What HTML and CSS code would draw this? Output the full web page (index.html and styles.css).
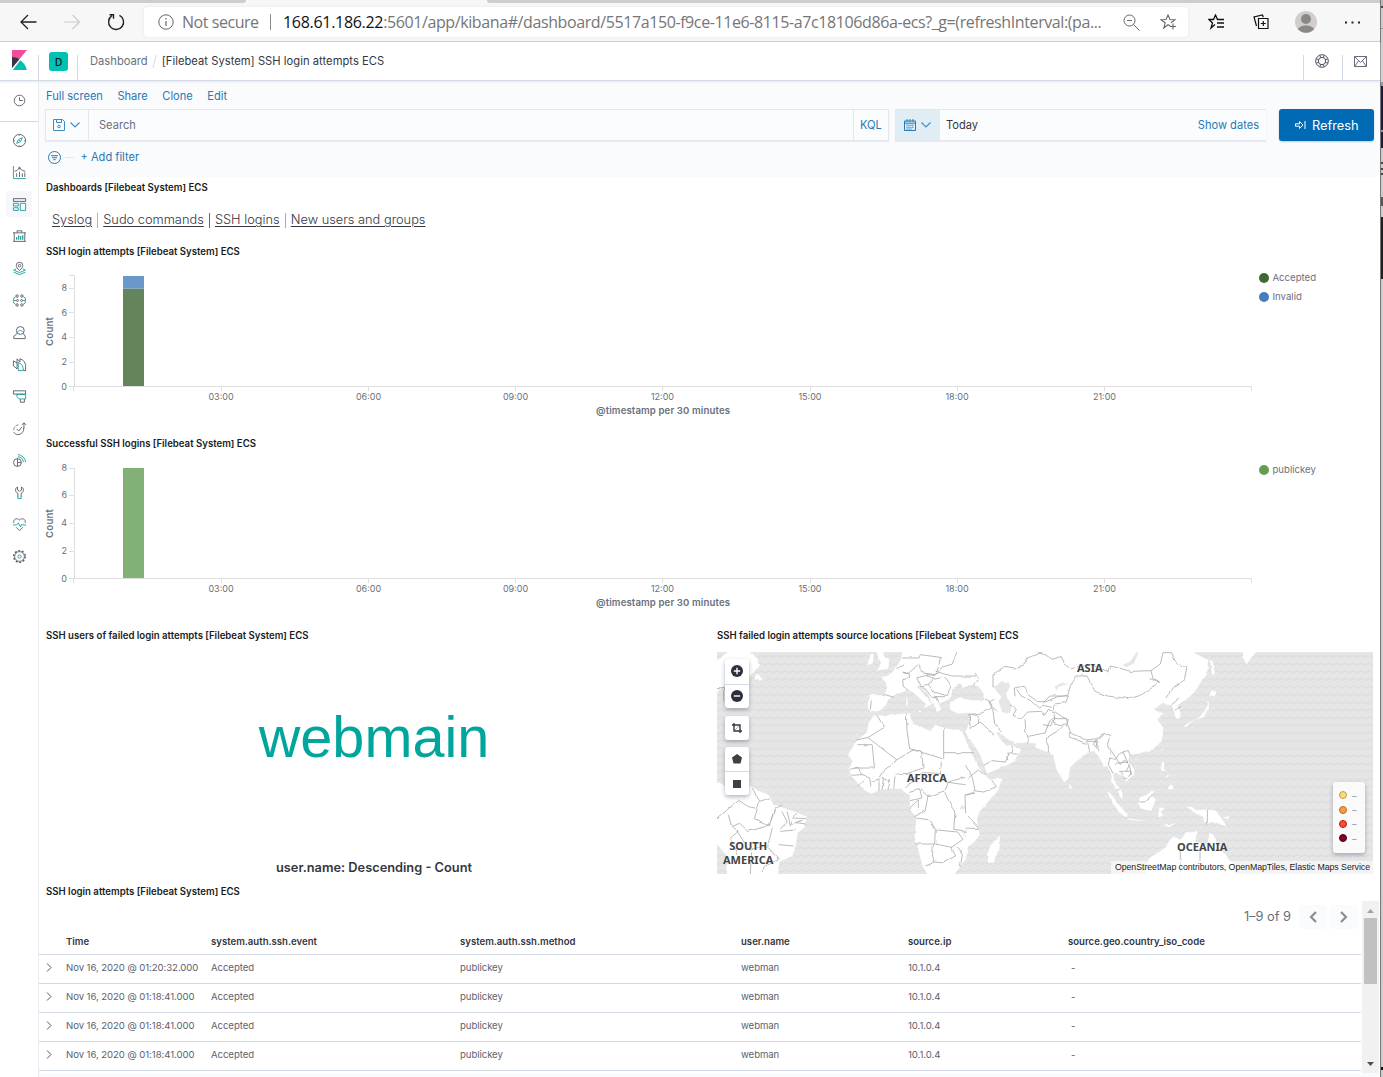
FILE: index.html
```html
<!DOCTYPE html>
<html lang="en">
<head>
<meta charset="utf-8">
<title>[Filebeat System] SSH login attempts ECS - Kibana</title>
<link rel="stylesheet" href="styles.css">
</head>
<body>
<div class="screen">
<div class="window">
  <div class="tabs"><i class="tab-one"></i><i class="tab-active"></i><i class="tab-rest"></i></div>
  <div class="browser">
    <svg class="b-back" width="18" height="16" viewBox="0 0 18 16"><path d="M16.500 8H1M8 1L1 8l7 7" fill="none" stroke="#222" stroke-width="1.3"/></svg>
    <svg class="b-fwd" width="18" height="16" viewBox="0 0 18 16"><path d="M0 8h15.500M8.500 1l7 7-7 7" fill="none" stroke="#ccc" stroke-width="1.200"/></svg>
    <svg class="b-reload" width="18" height="18" viewBox="0 0 18 18"><path d="M12.500 2.300A7.500 7.500 0 1 1 5 2.700M2.500 1.800h4v4" fill="none" stroke="#222" stroke-width="1.400"/></svg>
    <div class="address">
      <svg width="16" height="16" viewBox="0 0 16 16"><circle cx="8" cy="8" r="7.200" fill="none" stroke="#666"/><path d="M8 7v5M8 4v1.500" stroke="#666" stroke-width="1.200"/></svg>
      <span class="insecure">Not secure</span><i class="addr-sep"></i>
      <span class="url"><b>168.61.186.22</b>:5601/app/kibana#/dashboard/5517a150-f9ce-11e6-8115-a7c18106d86a-ecs?_g=(refreshInterval:(pa...</span>
      <svg class="zoom-out" width="17" height="17" viewBox="0 0 17 17"><g fill="none" stroke="#666"><circle cx="6.500" cy="6.500" r="5.500"/><path d="M10.500 10.500l6 6M4 6.500h5"/></g></svg>
      <svg width="17" height="17" viewBox="0 0 17 17"><path d="M10.300 12L8 10.700 3.800 14l1.400-5.200L1 5.800l5-.3L8 1l2 4.500 5 .3-4 3M10 12.500h6M13 9.500v6" fill="none" stroke="#666" stroke-width="1.100"/></svg>
    </div>
    <svg class="b-fav" width="17" height="16" viewBox="0 0 17 16"><path d="M7 10.500l-4 3.500 1.500-5L1 5.500h4.500L7.500 1l2 4.500h6.500M9 9h7M9 13h7" fill="none" stroke="#111" stroke-width="1.300"/></svg>
    <svg class="b-col" width="16" height="16" viewBox="0 0 16 16"><path d="M5.500 4.500h9.500v10h-9.500zM10.300 7v5M7.800 9.500h5M3.500 12L1 3l8.500-2 .8 2.300" fill="none" stroke="#111" stroke-width="1.200"/></svg>
    <svg class="b-user" width="22" height="22" viewBox="0 0 22 22"><circle cx="11" cy="11" r="11" fill="#d0cdcb"/><circle cx="11" cy="8" r="5" fill="#8a8785"/><path d="M3 18.300c2-5 14-5 16 0a11 11 0 0 1-16 0z" fill="#8a8785"/></svg>
    <svg width="15" height="3" viewBox="0 0 15 3"><path d="M0 .5h2v2H0zM6.500.5h2v2h-2zM13 .5h2v2h-2z" fill="#222"/></svg>
  </div>

  <header class="header">
    <div class="logo"><svg width="15" height="20" viewBox="0 0 15 20"><path d="M0 0h15L0 18z" fill="#f04e98"/><path d="M0 7c3 0 5 .7 7.300 2.200L0 18z" fill="#343741"/><path d="M8.300 10.200c3.500 2.400 5.500 5.600 6.500 9.800H.8z" fill="#00bfb3"/></svg></div>
    <div class="space"><span>D</span></div>
    <div class="crumbs"><span>Dashboard</span><i></i><strong>[Filebeat System] SSH login attempts ECS</strong></div>
    <div class="help"><svg width="14" height="14" viewBox="0 0 16 16"><g fill="none" stroke="#444b5a" stroke-width="1.100"><circle cx="8" cy="8" r="7.200"/><circle cx="8" cy="8" r="4.200"/><path d="M5.500 1.500l1 2.500M10.500 1.500l-1 2.500M5.500 14.500l1-2.500M10.500 14.500l-1-2.500M1.500 5.500l2.500 1M1.500 10.500l2.500-1M14.500 5.500l-2.500 1M14.500 10.500l-2.500-1"/></g></svg></div>
    <div class="mail"><svg width="14" height="11" viewBox="0 0 14 11"><path d="M.5.500h12v10H.5zM.8.800L6.500 6.500 12.200.8M.8 10.200l3.500-5M12.200 10.200l-3.500-5" fill="none" stroke="#555b69" stroke-width=".9"/></svg></div>
  </header>

  <div class="body">
    <nav class="nav">
      <div class="recent"><svg viewBox="0 0 16 16"><circle cx="8" cy="8" r="6.500"/><path d="M8 4v4h4"/></svg></div>
      <a><svg viewBox="0 0 16 16"><circle cx="8" cy="8" r="7.500"/><path d="M8 .5V2M8 14v1.500M.5 8H2M14 8h1.500"/><path class="t" d="M11.500 4.500L9.300 9.300l-4.800 2.200 2.200-4.800zM7 7l2 2"/></svg></a>
      <a><svg viewBox="0 0 16 16"><path class="t" d="M.5 0v15.500H16"/><path d="M4.500 13.500V9M8 13.500V7M11.500 13.500V9M14.500 13.500V8M2 6.500l3-1 3-3 3.500 3 3.500 1"/><circle cx="8" cy="2.500" r="1"/></svg></a>
      <a class="on"><svg viewBox="0 0 16 16"><path d="M.5.800h15v3.400H.5z"/><path class="t" d="M.5 6.500h6v3.300h-6zM.5 12h6v3.300h-6zM9 6.500h6.500v8.800H9z"/></svg></a>
      <a><svg viewBox="0 0 16 16"><path d="M5 3V1h6v2M0 3.500h16M1.500 3.500v10M14.500 3.500v10M0 14h16"/><path class="t" d="M4.500 12V8.500M7 12V6.500M9.500 12V7.500M12 12V6.500" stroke-width="1.500"/></svg></a>
      <a><svg viewBox="0 0 16 16"><path d="M8 10.500C5.500 8 4 6.500 4 4.300a4 4 0 0 1 8 0C12 6.500 10.500 8 8 10.500z"/><circle cx="8" cy="4.500" r="1.500"/><path class="t" d="M4 8.500L.8 10 8 13l7.200-3L12 8.500M.8 12.500L8 15.500l7.200-3"/></svg></a>
      <a><svg viewBox="0 0 16 16"><path class="t" d="M3 3.500L.8 5v6L3 12.500M13 3.500L15.200 5v6L13 12.500M1 8h3M12 8h3"/><circle cx="5" cy="2.500" r="1.500"/><circle cx="11" cy="2.500" r="1.500"/><circle cx="5" cy="13.500" r="1.500"/><circle cx="11" cy="13.500" r="1.500"/><circle cx="5.500" cy="8" r="1.200"/><circle cx="10.500" cy="8" r="1.200"/></svg></a>
      <a><svg viewBox="0 0 16 16"><circle cx="9" cy="5.500" r="4.800"/><path d="M5.500 9L1 12.500v3h14v-3L12.500 9"/><path class="t" d="M4.500 8.500c1.500-2 3-3 4.500-3s3 1 4.500 3"/></svg></a>
      <a><svg viewBox="0 0 16 16"><path d="M.5 3.500L5 6v7.500L.5 9.500zM5 6V1l3.500 3.500M8.500 5V1c4 1 6.500 4 7 8v6.500H13"/><path class="t" d="M6.500 5.500c4 1 6 4.500 6.500 10H6.500z"/></svg></a>
      <a><svg viewBox="0 0 16 16"><path d="M.5 1h15v4H.5zM9 11v4h5v-4"/><path class="t" d="M4.500 5.500h11V11H9c-2.500 0-4.500-2-4.500-5.500z"/></svg></a>
      <a><svg viewBox="0 0 16 16"><path d="M13 7c1 5-3 8.500-7 8.500-2 0-4-1-5-3M4.500 8.500l2.500 2.500 4-5M13.500 8V1M11 3.500L13.500 1 16 3.500"/><path class="t" d="M.8 10c0-4 3-6.500 6.500-6.500" stroke-dasharray="4 1.500"/></svg></a>
      <a><svg viewBox="0 0 16 16"><circle cx="5.500" cy="10.500" r="4.800"/><path d="M5.500 5.700v4.800h4.800M5.500 10.500V15"/><path class="t" d="M6 .8A10 10 0 0 1 15.500 10M6 3.500A7 7 0 0 1 12.700 10"/></svg></a>
      <a><svg viewBox="0 0 16 16"><path d="M5.500 1.200C2 3 2.500 7.500 6 9v4M10.500 1.200C14 3 13.500 7.500 10 9v4M5.500 1.200V5L8 6.500 10.500 5V1.200"/><path class="t" d="M6 12v3.500h4V12"/></svg></a>
      <a><svg viewBox="0 0 16 16"><path d="M1 6C0 1 5-.5 8 2.500 11-.5 16 1 15 6M4 11.500l4 4 4-4"/><path class="t" d="M0 8.500h4.500L6.500 6l2.500 5 1.800-3.500 1 1H16"/></svg></a>
      <a><svg viewBox="0 0 16 16"><circle cx="8" cy="8" r="6"/><circle cx="8" cy="8" r="7.200" stroke-dasharray="2.400 2.100" stroke-width="1.600"/><circle class="t" cx="8" cy="8" r="2"/></svg></a>
    </nav>

    <main class="main">
      <section class="query">
        <div class="menu"><a>Full screen</a><a>Share</a><a>Clone</a><a>Edit</a></div>
        <div class="bar">
          <div class="search">
            <span class="saved"><svg width="12" height="12" viewBox="0 0 12 12"><path d="M.5.500h9l2 2v9H.5zM3.500.500v3h5v-3" fill="none" stroke="#3e8bc4"/><circle cx="6" cy="7.500" r="1.300" fill="none" stroke="#3e8bc4"/></svg><svg width="10" height="6" viewBox="0 0 10 6"><path d="M.5.500L5 5 9.500.500" fill="none" stroke="#3e8bc4" stroke-width="1.100"/></svg></span>
            <span class="placeholder">Search</span><span class="kql">KQL</span>
          </div>
          <div class="dates">
            <span class="cal"><svg width="12" height="12" viewBox="0 0 12 12"><path d="M.5 2h11v9.500H.5zM.5 4.200h11M3 0v3M6 0v3M9 0v3" fill="none" stroke="#217bbb"/><path d="M2.500 6.300h7M2.500 8.300h7M2.500 10h5" stroke="#217bbb" stroke-dasharray="1.200 .7" stroke-width="1.100"/></svg><svg width="10" height="6" viewBox="0 0 10 6"><path d="M.5.500L5 5 9.500.500" fill="none" stroke="#3e8bc4" stroke-width="1.100"/></svg></span>
            <span class="today">Today</span><a>Show dates</a>
          </div>
          <button class="refresh"><svg width="11" height="10" viewBox="0 0 11 10"><path d="M.5 3.800h4V1.500L8 5 4.500 8.500V6.200h-4zM10 1v8" fill="none" stroke="#fff"/></svg><span>Refresh</span></button>
        </div>
        <div class="filters"><svg width="13" height="13" viewBox="0 0 13 13"><g fill="none" stroke="#217bbb"><circle cx="6.500" cy="6.500" r="6"/><path d="M3 4.700h7M4 6.700h5M5.300 8.700h2.400"/></g></svg><i></i><a>+ Add filter</a></div>
      </section>

      <section class="panel p-links">
        <h2>Dashboards [Filebeat System] ECS</h2>
        <div class="links"><a>Syslog</a><i class="o"></i><a>Sudo commands</a><i class="g"></i><a>SSH logins</a><i class="b"></i><a>New users and groups</a></div>
      </section>

      <section class="panel p-chart">
        <h2>SSH login attempts [Filebeat System] ECS</h2>
        <div class="chart">
          <svg width="1215" height="165" viewBox="39 261 1215 165">
            <path class="bar-accepted" d="M123 288.500h21V386h-21z"/><path class="bar-invalid" d="M123 276h21v12.500h-21z"/>
            <path class="axis" d="M69 275.500h5.500M74.500 275.500V386.500M69 288.500h4.500M69 312.500h4.500M69 337.500h4.500M69 362.500h4.500M69 386.500H1251.500V391M73.500 386.500V391M221.500 386.500V391M368.500 386.500V391M515.500 386.500V391M662.500 386.500V391M810.500 386.500V391M957.500 386.500V391M1104.500 386.500V391"/>
            <g class="ylab"><text x="67" y="291">8</text><text x="67" y="316">6</text><text x="67" y="340">4</text><text x="67" y="365">2</text><text x="67" y="390">0</text></g>
            <g class="xlab"><text x="221" y="400">03:00</text><text x="368.500" y="400">06:00</text><text x="515.500" y="400">09:00</text><text x="662.500" y="400">12:00</text><text x="810" y="400">15:00</text><text x="957" y="400">18:00</text><text x="1104.500" y="400">21:00</text></g>
            <text class="atitle" x="663" y="414" textLength="134">@timestamp per 30 minutes</text>
            <text class="atitle" transform="translate(53 331.500) rotate(-90)" textLength="29">Count</text>
          </svg>
          <ul class="legend"><li><i class="d1"></i>Accepted</li><li><i class="d2"></i>Invalid</li></ul>
        </div>
      </section>

      <section class="panel p-chart">
        <h2>Successful SSH logins [Filebeat System] ECS</h2>
        <div class="chart">
          <svg width="1215" height="165" viewBox="39 453 1215 165">
            <path class="bar-key" d="M123 468h21v110h-21z"/>
            <path class="axis" d="M69 468.500h5.500M74.500 468.500V578.500M69 495.500h4.500M69 523.500h4.500M69 551.500h4.500M69 578.500H1251.500V583M73.500 578.500V583M221.500 578.500V583M368.500 578.500V583M515.500 578.500V583M662.500 578.500V583M810.500 578.500V583M957.500 578.500V583M1104.500 578.500V583"/>
            <g class="ylab"><text x="67" y="471">8</text><text x="67" y="498">6</text><text x="67" y="526">4</text><text x="67" y="554">2</text><text x="67" y="582">0</text></g>
            <g class="xlab"><text x="221" y="592">03:00</text><text x="368.500" y="592">06:00</text><text x="515.500" y="592">09:00</text><text x="662.500" y="592">12:00</text><text x="810" y="592">15:00</text><text x="957" y="592">18:00</text><text x="1104.500" y="592">21:00</text></g>
            <text class="atitle" x="663" y="606" textLength="134">@timestamp per 30 minutes</text>
            <text class="atitle" transform="translate(53 523.500) rotate(-90)" textLength="29">Count</text>
          </svg>
          <ul class="legend"><li><i class="d3"></i>publickey</li></ul>
        </div>
      </section>

      <div class="split">
        <section class="panel p-cloud">
          <h2>SSH users of failed login attempts [Filebeat System] ECS</h2>
          <div class="cloud"><span>webmain</span></div>
          <p>user.name: Descending - Count</p>
        </section>
        <section class="panel p-map">
          <h2>SSH failed login attempts source locations [Filebeat System] ECS</h2>
          <div class="map">
            <svg width="656" height="222" viewBox="6 21 1968 666">
              <defs>
                <pattern id="waves" width="24" height="23" patternUnits="userSpaceOnUse"><path d="M0 10q6 7 12 2t12-2" fill="none" stroke="#dadada" stroke-width="3"/></pattern>
                <filter id="rough" x="0" y="0" width="1" height="1"><feTurbulence type="fractalNoise" baseFrequency=".035" numOctaves="2" seed="4"/><feDisplacementMap in="SourceGraphic" scale="13" xChannelSelector="R" yChannelSelector="G" color-interpolation-filters="sRGB"/></filter>
              </defs>
              <path d="M6 21h1968v666H6z" fill="#e6e6e6"/><path d="M6 21h1968v666H6z" fill="url(#waves)"/>
              <g transform="translate(3 2)"><g filter="url(#rough)">
              <g class="land">
                <path d="M50 11L100 14 122 36 133 60 120 80 105 95 60 110 30 120 -10 160V60zM118 105l10-20 14 12 11 7z"/>
                <path d="M562 11L558 42 545 65 535 78 522 92 497 97 513 115 510 145 500 151 462 150 457 175 459 195 471 203 491 200 514 182 520 165 545 148 562 144 578 135 592 142 610 158 632 178 624 192 645 182 655 176 625 150 607 126 616 124 640 150 655 178 665 203 680 196 672 178 700 166 710 155 712 132 735 116 744 130 775 120 792 128 806 148 800 166 768 166 735 160 705 172 700 194 730 208 766 205 762 235 750 262 765 285 792 325 806 360 816 388 870 365 900 350 919 315 905 303 895 297 876 303 862 290 845 264 855 264 880 286 905 296 935 295 975 298 992 310 1004 330 1030 335 1060 11z"/>
                <path d="M455 63l12-36h10l-3 30zM483 11l6 30 8 14-12 20 35-5 4-22-18-15-5-22zM605 195l18 4-7 7zM573 158h5v26h-5z"/>
                <path d="M475 212L530 210 585 204 592 236 628 250 645 259 660 240 692 250 742 260 758 298 772 325 784 355 804 385 820 404 863 400 852 430 818 474 792 504 785 530 793 575 760 606 754 640 738 665 712 697H640L620 660 608 610 598 575 604 520 584 490 583 450 556 434 530 432 500 436 467 447 432 422 406 390 400 370 412 350 398 330 424 290 455 262 460 235z"/>
                <path d="M853 570l5 22-22 62-14 1-4-32 8-22 18-14z"/>
                <path d="M-10 400l38 22 24 30 58-27 26 15 26 10 14 30 40 12 30 13 30 10-4 30-22 20-9 45-8 25-38 16-12 46H33l7-57-50-60z"/>
              </g>
              <g class="land" transform="translate(984)">
                <path d="M-20 11H448L458 28 496 44 494 80 476 110 456 142 430 165 404 182 414 206 411 222 399 222 394 206 386 182 372 182 360 174 334 194 362 206 344 225 362 250 357 285 330 315 285 328 262 330 257 348 275 375 272 395 250 412 232 392 212 386 213 404 226 424 240 450 238 468 222 440 208 415 203 385 192 365 182 368 174 345 163 330 152 316 136 322 112 340 82 368 78 400 65 417 40 375 30 330-20 310z"/>
                <path d="M595 11h55l-26 30-16 24zM502 45l7 2 7 36-3 10-8-8zM498 152l8-17 20 10-14 14zM421 246l9-10 30-12 28-28 5-28 5 2v24l-12 22-32 12-26 20zM78 415l9 12-2 7-7-2z"/>
                <path d="M188 440l20 12 24 34 24 24-8 8-22-16zM250 520l50 6 4 4-46-4zM283 470l4-12 20-6 28-18-6 22 10 8-14 36-32-8zM345 512l4-24 18 2-12 10 12 16-8-4-10 8zM353 378l4-30 8 6-2 20 10 8-12-2zM375 430l12-12 6 12-8 6zM352 320l8-18 2 8-6 10zM274 345l10-4-4 8zM368 400l8-16 2 14zM344 541l60-6-22 10z"/>
                <path d="M431 484l16 2 12 10 18-2 36 2 20 20 20 30-34-10-28 2-10-20-28-14zM534 518l30-4-10 8z"/>
                <path d="M303 697L318 640 370 606 390 575 415 583 428 562 462 561 458 590 492 602 500 560 512 570 524 600 550 635 574 662 578 697z"/>
              </g>
              <path d="M955 11H1068V325H1022L990 305 955 293z" fill="#fff"/>
              <g fill="#e6e6e6"><path d="M834 128L860 110 886 120 874 150 890 182 886 205 862 203 850 170 860 158zM735 480h14v14h-14zM718 495l5 24-5-2zM748 545l5 36-5-8z"/><path transform="translate(984)" d="M238 62l24-12 20-29h5l-12 34-24 12zM34 126l18-10 24 2-30 8-6 8z"/></g>
              <g class="borders">
                <path d="M834 128v-38l35-25 30 5 30-10 8-20 45-18M900 155l-2-25 28-5 12 24 30 22 20 0M905 134l14 20 28 14 24 22 13-8 26 6M780 85l10 15-15 22M565 60l-20 12M562 40h50l4-10 60 8-6 30-8 22-46-6-2-24M610 60l-30 26-18-4M565 85l18 2v14l-20 4 2 20 14 12M605 100l30-8 20 10-10 16-28 6zM634 90l26 2 20-24 32-10 14-37M662 80l46 14 75 0M655 104l32-6 20 25-10 30-40-10-16-22M620 120l30 36 40 0M660 155l10 20M505 148l32 10M470 155l-4 40M760 210l40-5 30-15-8-22M804 160l20 10 8 16 14 14M826 170l12-6M833 190l6 50 20 22M762 212l4 40 30-20 44 40M884 180l20 14-10 18 26 10M770 208l22 8-2 20M920 222l18-20 40-2 14 10M930 224l2 30 8 28-6 14M940 275l50-10 14-36 16-12M806 362l26-14 36 4 12-24 30 0M878 348l-2-22M895 300l-4 28"/>
                <path d="M486 212l22 36-48 30-35 8M574 207l2 50 8 55 98 30M458 278l88 68M686 250v74h90M686 324v18M472 302l6 68-60 0M430 300h42M546 345l50-30 22 8M546 345l-36 30-14 22 20 10M620 320l4 50-46 16-36 2M680 342l-4 44 16 26 60 8M622 384l56 2M752 362l20 36 8 40M760 400l30-24 20 18M700 412l-10 26-50 18-22-20M776 438l30 4 38-16-14-20M750 450l30-4M750 450l2 60 38 40M690 446l30 60-4 48 38 6M640 450l-10 50-32 16M605 520l40 6 16 28-2 44-58 0M660 598l50 10 34-24-16-22-64-6M655 600l-4 56-20 8M706 604l16 30-40 20-30-2M726 606l16 24-6 36M752 550l38 2M540 395l-4 36M520 404v30M505 404l-4 32M492 405v34M470 410l24-8M404 374l26-6 10 22-30 2M440 390l24 10 4 26M430 422l14-14M583 440l30-8 8 28-36 8M584 490l26-24v34M572 430l24-28 24-16M700 412l50-14M755 452l22-10"/>
                <path d="M6 520l40-36 24-18 30 20 20 4M40 510l10 36 24-10 26 24 64-18M112 430l22 40 30-10M134 470l-16 52 46 20 14-50M164 540l16-50 22-8M172 550l-14 54-58 10-34-56-20-20M200 500l16 30-20 24M216 500l10 40 40-14M240 506l-14 36M196 560l44-4M190 600l46 4M160 606l30 40-40 18-10 20M70 560l-24 20 20 50M110 620l-4 66M240 520l34 2M244 534l30 4M6 132h20v34"/>
              </g>
              <g class="borders" transform="translate(984)">
                <path d="M-20 22l26 8 22 14 24-8 10 22 22 14 60-12 54 22 6-18 60 16 60-2 28-20 8-34 26 0 10 24 16 16 20 4-8 36-30 22-26 34M324 78l6 24 20 10-54 38-40 12-62-8-38-14-24-46-34 0-16 30-8 28-30 4-38 16M320 102l28 10M0 176l20-22 56 0-8 20-34 4-4 20M4 210l14-14 14 6 4 20-14 22-22-4M34 200l26 18 16 6-6 22M34 222h36l4 16-38 2zM62 240l-20 20-36 22 10 22 0 20M74 240l10 26 46 20 30-4 20-16 20 6-6 28 10 30M80 262l-2 14 50 20 6-10M134 290h30l-6 20M134 294l6 26M160 284l-10 16 10 12M180 270l-22 20 10 30M200 340l18 4 14-22 24-4 6 16M200 340l-4 20 14 26M206 320l26 40 12-14 16 14-10 18M216 356l40-4M230 380h34l-2 14-16 10zM240 322l20 44 6 26M386 180l20-16M396 196l18-10M284 470l24-2 24-20M493 496v44M412 616v71M471 620v28M220 440l14-6"/>
              </g>
              </g></g>
            </svg>
            <div class="place asia">ASIA</div><div class="place africa">AFRICA</div><div class="place sa">SOUTH<br>AMERICA</div><div class="place oc">OCEANIA</div>
            <div class="tools">
              <div><span><svg width="12" height="12" viewBox="0 0 12 12"><circle cx="6" cy="6" r="6" fill="#2c2f3d"/><path d="M6 2.800v6.400M2.800 6h6.400" stroke="#fff" stroke-width="1.400"/></svg></span><span><svg width="12" height="12" viewBox="0 0 12 12"><circle cx="6" cy="6" r="6" fill="#2c2f3d"/><path d="M2.800 6h6.400" stroke="#fff" stroke-width="1.400"/></svg></span></div>
              <div><span><svg width="10" height="10" viewBox="0 0 10 10"><path d="M2 0v8h8M0 2h8v8" fill="none" stroke="#343741" stroke-width="1.400"/><path d="M3 7l4-4" stroke="#9a9ca3" stroke-width=".8"/></svg></span></div>
              <div><span><svg width="10" height="10" viewBox="0 0 10 10"><path d="M5 0l5 3.500L8.500 9.500h-7L0 3.500z" fill="#404040"/></svg></span><span><svg width="8" height="8" viewBox="0 0 8 8"><path d="M0 0h8v8H0z" fill="#404040"/></svg></span></div>
            </div>
            <div class="keys"><p><i class="k1"></i>–</p><p><i class="k2"></i>–</p><p><i class="k3"></i>–</p><p><i class="k4"></i>–</p></div>
            <div class="credit">OpenStreetMap contributors, OpenMapTiles, Elastic Maps Service</div>
          </div>
        </section>
      </div>

      <section class="panel p-table">
        <h2>SSH login attempts [Filebeat System] ECS</h2>
        <div class="scroll">
          <div class="docs">
            <div class="pager"><span>1–9 of 9</span><b><svg width="8" height="12" viewBox="0 0 8 12"><path d="M7 1L2 6l5 5" fill="none" stroke="#8a8d93" stroke-width="2.200"/></svg></b><b><svg width="8" height="12" viewBox="0 0 8 12"><path d="M1 1l5 5-5 5" fill="none" stroke="#8a8d93" stroke-width="2.200"/></svg></b></div>
            <div class="row head"><span></span><span>Time</span><span>system.auth.ssh.event</span><span>system.auth.ssh.method</span><span>user.name</span><span>source.ip</span><span>source.geo.country_iso_code</span></div>
            <div class="row"><span><svg width="6" height="9" viewBox="0 0 6 9"><path d="M1 .5l4 4-4 4"/></svg></span><span>Nov 16, 2020 @ 01:20:32.000</span><span>Accepted</span><span>publickey</span><span>webman</span><span>10.1.0.4</span><span class="nil">-</span></div>
            <div class="row"><span><svg width="6" height="9" viewBox="0 0 6 9"><path d="M1 .5l4 4-4 4"/></svg></span><span>Nov 16, 2020 @ 01:18:41.000</span><span>Accepted</span><span>publickey</span><span>webman</span><span>10.1.0.4</span><span class="nil">-</span></div>
            <div class="row"><span><svg width="6" height="9" viewBox="0 0 6 9"><path d="M1 .5l4 4-4 4"/></svg></span><span>Nov 16, 2020 @ 01:18:41.000</span><span>Accepted</span><span>publickey</span><span>webman</span><span>10.1.0.4</span><span class="nil">-</span></div>
            <div class="row"><span><svg width="6" height="9" viewBox="0 0 6 9"><path d="M1 .5l4 4-4 4"/></svg></span><span>Nov 16, 2020 @ 01:18:41.000</span><span>Accepted</span><span>publickey</span><span>webman</span><span>10.1.0.4</span><span class="nil">-</span></div>
          </div>
          <div class="track"><svg width="7" height="4" viewBox="0 0 7 4"><path d="M0 4l3.500-4L7 4z" fill="#a3a3a3"/></svg><i></i><svg class="down" width="7" height="4" viewBox="0 0 7 4"><path d="M0 0h7L3.500 4z" fill="#505050"/></svg></div>
        </div>
      </section>
    </main>
  </div>
</div>
<div class="edge"></div>
</div>
</body>
</html>
```
FILE: styles.css
```css
* { box-sizing: border-box; }
body { margin: 0; background: #fff; font-family: Inter, "Liberation Sans", sans-serif; color: #343741; }
svg { display: block; flex: none; }
h2, p, ul { margin: 0; padding: 0; }
i { display: block; flex: none; }
.screen { display: grid; grid-template-columns: 1380px 3px; width: 1383px; height: 1077px; overflow: hidden; }
.window { display: flex; flex-direction: column; height: 1077px; min-width: 0; }
.edge { border-left: 1px solid #777; background: linear-gradient(#bbb 0 6px, #444 6px 8px, #ccc 8px 28px, #999 28px 29px, #d0d0d0 29px 82px, #999 82px 86px, #1d1d3a 86px 130px, #999 130px 132px, #1d1d3a 132px 148px, #ccc 148px 162px, #444 162px 164px, #ccc 164px 168px, #444 168px 170px, #ccc 170px 173px, #444 173px 175px, #ccc 175px 197px, #555 197px 206px, #ccc 206px 217px, #1d2124 217px 279px, #ccc 279px 1067px, #111 1067px 1070px, #ccc 1070px); }

/* Browser chrome */
.tabs { display: flex; height: 3px; background: #f7f7f7; }
.tab-one { width: 246px; background: #cdcdcd; border-radius: 0 0 3px 0; }
.tab-active { width: 241px; }
.tab-rest { flex: 1; background: #cdcdcd; border-radius: 0 0 0 3px; }
.browser { display: flex; align-items: center; height: 39px; padding: 0 0 0 20px; background: #f7f7f7; border-bottom: 1px solid #ccc; }
.b-fwd { margin-left: 26px; }
.b-reload { margin-left: 25px; }
.address { display: flex; align-items: center; width: 1044px; height: 30px; margin-left: 19px; padding-left: 14px; background: #fff; border-radius: 4px; box-shadow: 0 0 3px #e4e4e4; font: 16px "Open Sans", sans-serif; color: #767676; white-space: nowrap; }
.insecure { width: 77px; margin-left: 8px; letter-spacing: -.45px; }
.addr-sep { width: 1px; height: 16px; margin: 0 13px 0 11px; background: #888; }
.url { width: 820px; margin-left: -1px; letter-spacing: -.4px; }
.url b { font-weight: 400; color: #111; letter-spacing: -.3px; }
.zoom-out { margin: 0 20px 0 20px; }
.b-fav { margin-left: 20px; }
.b-col { margin-left: 28px; }
.b-user { margin: 0 28px 0 26px; }

/* Kibana header */
.header { display: flex; height: 39px; border-bottom: 1px solid #d3dae6; box-shadow: 0 1px 2px #e3e7f0; position: relative; }
.logo { width: 38px; padding: 8px 0 0 12px; }
.space { width: 40px; height: 25px; margin-top: 13px; border: solid #d3dae6; border-width: 0 1px; padding-left: 10px; }
.space span { display: flex; align-items: center; justify-content: center; width: 19px; height: 19px; margin-top: -3px; border-radius: 3px; background: #00bfb3; color: #111; font-size: 10px; font-weight: 500; }
.crumbs { display: flex; align-items: center; flex: 1; padding-left: 12px; font-size: 11.2px; color: #69707d; white-space: nowrap; }
.crumbs i { width: 1px; height: 13px; margin: 0 6.500px; background: #d3dae6; transform: rotate(15deg); }
.crumbs strong { font-weight: 400; color: #343741; letter-spacing: .03px; }
.help, .mail { height: 25px; margin-top: 13px; border-left: 1px solid #d3dae6; }
.help { width: 39px; padding: 0 0 0 11px; }
.help svg { margin-top: -1px; }
.mail { width: 38px; padding: 1px 0 0 11px; }

.body { display: flex; flex: 1; min-height: 0; }
.nav { width: 39px; flex: none; border-right: 1px solid #e9ebf0; background: #fff; }
.nav svg { width: 13px; height: 13px; fill: none; stroke: #535966; stroke-width: 1.1; overflow: visible; }
.nav .t { stroke: #1f9c95; }
.recent { display: flex; align-items: center; height: 41px; padding: 0 0 2px 13px; border-bottom: 1px solid #d3dae6; }
.nav a { display: flex; align-items: center; justify-content: center; width: 26px; height: 26px; margin: 0 0 6px 6px; border-radius: 3px; }
.nav .recent + a { margin-top: 5px; }
.nav .on { background: #f5f7fa; }
.main { width: 1341px; }

/* Query bar */
.query { height: 96px; margin-bottom: 1px; padding: 9px 6px 0 7px; background: #fafbfd; font-size: 11.1px; }
.query a { color: #2878b5; }
.menu { display: flex; gap: 14.500px; height: 13px; line-height: 13px; }
.bar { display: flex; height: 32px; margin: 6px 0 0 -1px; }
.search, .dates { display: flex; align-items: center; height: 32px; border: 1px solid #e2e6ee; background: #fbfcfd; box-shadow: 0 1px 1px #eceef4; }
.search { width: 844px; }
.saved { display: flex; align-items: center; gap: 5px; width: 43px; height: 30px; padding-left: 7px; border-right: 1px solid #e2e6ee; }
.placeholder { flex: 1; padding-left: 10px; color: #69707d; }
.kql { width: 35px; height: 30px; line-height: 30px; padding-left: 6px; border-left: 1px solid #e2e6ee; color: #2878b5; }
.dates { width: 371px; margin-left: 6px; border-left: 0; border-right: 0; }
.cal { display: flex; align-items: center; gap: 5px; width: 45px; height: 30px; padding-left: 9px; background: #e0edf5; }
.today { flex: 1; padding-left: 6px; }
.dates a { padding-right: 7px; }
.refresh { display: flex; align-items: center; gap: 6px; width: 95px; height: 32px; margin: 0 0 0 13px; padding: 0 0 0 16px; border: 0; border-radius: 3px; background: #006bb4; color: #fff; font: 12.8px Inter, sans-serif; box-shadow: 0 1px 2px #bcd; }
.filters { display: flex; align-items: center; height: 14px; margin-top: 9px; padding-left: 2px; }
.filters i { width: 9px; height: 1px; margin: 0 6.500px 0 4px; background: #e2e6ee; }

/* Panels */
.panel h2 { height: 19px; padding-left: 7px; font-size: 9.640px; font-weight: 600; line-height: 19px; color: #1a1c21; white-space: nowrap; }
.p-links { height: 64px; }
.links { display: flex; align-items: center; padding: 15px 0 0 13px; font-size: 12.8px; font-weight: 300; line-height: 16px; }
.links a { text-decoration: underline; text-underline-offset: 2px; }
.links i { width: 1px; height: 15px; margin: 0 5.100px; }
.links .o { background: #e8a95c; }
.links .g { background: #667; }
.links .b { background: #6fbce8; }
.p-chart { height: 192px; }
.chart { display: flex; }
.chart text { font-size: 9px; fill: #69707d; }
.ylab { text-anchor: end; }
.xlab, .atitle { text-anchor: middle; }
.chart .atitle { font-size: 9.600px; font-weight: 600; }
.axis { fill: none; stroke: #dedede; }
.bar-accepted { fill: #64855c; }
.bar-invalid { fill: #6a98cb; }
.bar-key { fill: #82b178; }
.legend { padding: 7px 0 0 4.500px; list-style: none; font-size: 9.600px; color: #69707d; }
.legend li { display: flex; align-items: center; gap: 4px; height: 19px; }
.legend i { width: 10px; height: 10px; border-radius: 50%; }
.d1 { background: #3f6833; }
.d2 { background: #447ebc; }
.d3 { background: #629e51; }
.split { display: grid; grid-template-columns: 671px 670px; height: 256px; }
.cloud { display: flex; align-items: center; justify-content: center; height: 183px; padding-right: 1px; font: 57.600px "Liberation Sans", sans-serif; color: #00a69b; }
.p-cloud p { margin-top: 32px; padding-right: 1px; text-align: center; font-size: 12.8px; font-weight: 600; line-height: 16px; }

/* Map */
.map { position: relative; width: 656px; height: 222px; margin: 7px 0 0 7px; overflow: hidden; }
.land { fill: #fff; stroke: #d3dae2; stroke-width: 1; }
.borders { fill: none; stroke: #a9a9a9; stroke-width: 2.400; stroke-linejoin: round; }
.place { position: absolute; font: 700 11px/14px "Noto Sans", sans-serif; color: #444; text-align: center; text-shadow: 0 0 2px #fff; }
.asia { left: 360px; top: 9px; }
.africa { left: 190px; top: 119px; }
.sa { left: 6px; top: 187px; }
.oc { left: 460px; top: 188px; }
.tools { position: absolute; left: 8px; top: 7px; display: grid; gap: 8px; }
.tools div { width: 24px; border-radius: 3px; background: #fff; box-shadow: 0 2px 4px rgba(60, 75, 100, .4); }
.tools span { display: flex; align-items: center; justify-content: center; height: 24px; }
.tools div:first-child span { height: 24.500px; }
.tools div:last-child { margin-top: -1px; }
.tools span + span { border-top: 1px solid #d3dae6; }
.keys { position: absolute; left: 616px; top: 130px; width: 32px; height: 71px; padding: 6px; border-radius: 3px; background: #fafafb; box-shadow: 0 2px 4px rgba(60, 75, 100, .4); font-size: 9px; color: #8c95a5; }
.keys p { display: flex; align-items: center; gap: 5px; height: 14.400px; }
.keys i { width: 8px; height: 8px; border: 1px solid; border-radius: 50%; }
.keys .k1 { background: #fed976; border-color: #baa04f; }
.keys .k2 { background: #fd9a3c; border-color: #b87023; }
.keys .k3 { background: #fc4e2a; border-color: #b91b18; }
.keys .k4 { background: #800026; border-color: #500018; }
.credit { position: absolute; right: 0; bottom: 0; padding: 0 3px 1px 4px; background: rgba(255, 255, 255, .6); font: 8.800px/12px "Liberation Sans", sans-serif; letter-spacing: -.06px; white-space: nowrap; color: #222; }

/* Saved search table */
.scroll { display: flex; height: 172px; }
.docs { width: 1322px; font-size: 9.600px; color: #5c626e; }
.docs > .row + .row { height: 29px; padding-bottom: 3px; letter-spacing: -.07px; }
.pager { display: flex; align-items: center; justify-content: flex-end; height: 28px; padding: 3px 3px 0 0; font-size: 12.8px; color: #69707d; }
.pager b { display: flex; align-items: center; justify-content: center; width: 28px; height: 24px; margin-left: 3px; border-radius: 3px; background: #fafbfd; }
.pager span { margin-right: 5px; }
.row { display: grid; grid-template-columns: 27px 145px 249px 281px 167px 160px 1fr; align-items: center; height: 26px; border-bottom: 1px solid #d3dae6; white-space: nowrap; }
.row span:first-child { padding-left: 7px; }
.row svg { fill: none; stroke: #555; }
.head { font-weight: 600; color: #343741; }
.nil { padding-left: 3px; }
.track { display: flex; flex-direction: column; align-items: center; width: 17px; margin-left: 1px; padding: 8px 0 7px; background: #f1f1f1; }
.track i { width: 13px; height: 66px; margin-top: 5px; background: #c1c1c1; }
.track .down { margin-top: auto; }
.p-table { height: 195px; border-bottom: 4px solid #fafbfd; }
```
